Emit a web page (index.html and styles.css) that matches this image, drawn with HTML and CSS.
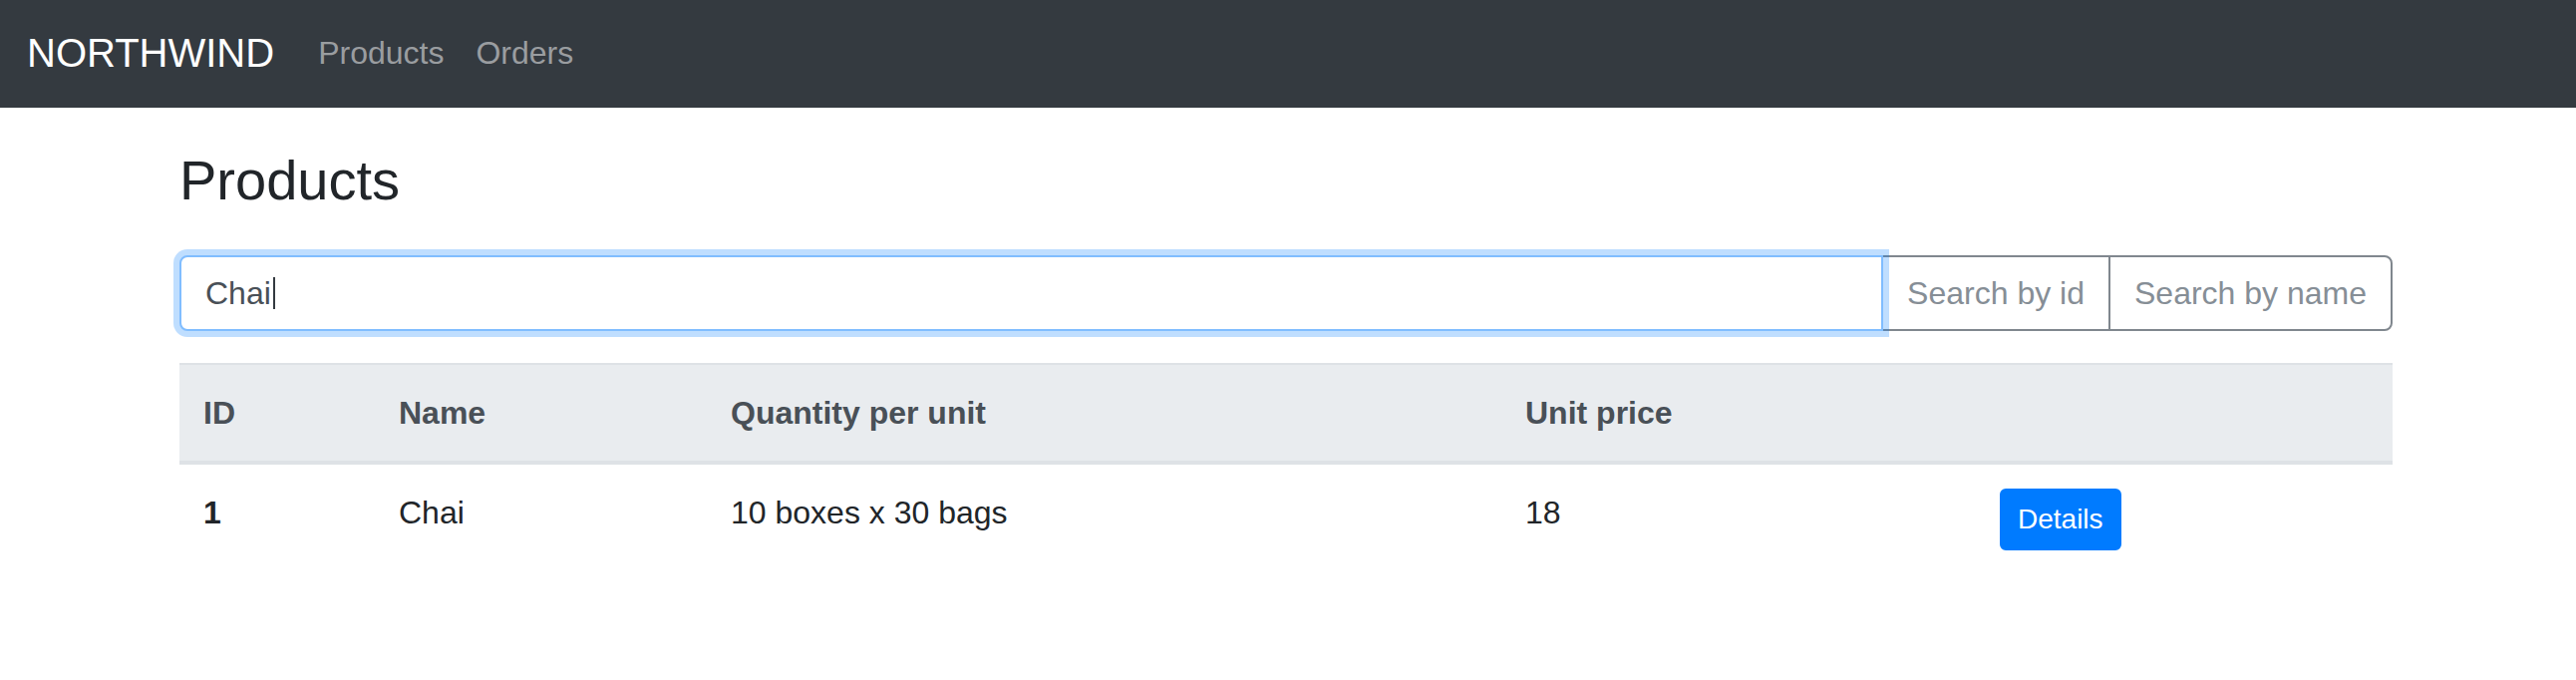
FILE: index.html
```html
<!DOCTYPE html>
<html lang="en">
<head>
<meta charset="utf-8">
<title>Northwind - Products</title>
<link rel="stylesheet" href="styles.css">
</head>
<body>
<nav class="navbar">
  <a class="brand" href="#">NORTHWIND</a>
  <div class="nav-links">
    <a class="nav-link" href="#">Products</a>
    <a class="nav-link" href="#">Orders</a>
  </div>
</nav>
<main class="container">
  <h3 class="page-title">Products</h3>
  <div class="input-group">
    <div class="search-main"><span class="search-value">Chai</span><span class="caret"></span></div>
    <div class="addon">Search by id</div>
    <div class="addon addon-last">Search by name</div>
  </div>
  <table class="table">
    <colgroup>
      <col class="w-id">
      <col class="w-name">
      <col class="w-qty">
      <col class="w-price">
      <col class="w-act">
    </colgroup>
    <thead>
      <tr>
        <th>ID</th>
        <th>Name</th>
        <th>Quantity per unit</th>
        <th>Unit price</th>
        <th></th>
      </tr>
    </thead>
    <tbody>
      <tr>
        <th class="row-id">1</th>
        <td>Chai</td>
        <td>10 boxes x 30 bags</td>
        <td>18</td>
        <td><button class="btn-details" type="button">Details</button></td>
      </tr>
    </tbody>
  </table>
</main>
</body>
</html>
```
FILE: styles.css
```css
html, body {
  margin: 0;
  padding: 0;
  background: #ffffff;
}

body {
  font-family: "Liberation Sans", Arial, sans-serif;
  color: #212529;
  font-size: 32px;
  line-height: 48px;
}

.navbar {
  display: flex;
  align-items: center;
  height: 108px;
  box-sizing: border-box;
  padding: 0 0 3px 27px;
  background: #343a40;
}

.brand {
  font-size: 40px;
  line-height: 60px;
  color: #ffffff;
  text-decoration: none;
  margin-right: 28px;
}

.nav-links {
  display: flex;
}

.nav-link {
  font-size: 32px;
  line-height: 48px;
  padding: 0 16px;
  color: #9a9da0;
  text-decoration: none;
}

.container {
  width: 2220px;
  margin-left: 180px;
}

.page-title {
  font-size: 56px;
  line-height: 67px;
  font-weight: 500;
  margin: 39px 0 42px;
  color: #212529;
}

.input-group {
  display: flex;
  height: 76px;
  margin-bottom: 32px;
}

.search-main {
  flex: 1;
  display: flex;
  align-items: center;
  box-sizing: border-box;
  padding: 0 24px;
  border: 2px solid #80bdff;
  border-radius: 8px 0 0 8px;
  box-shadow: 0 0 0 6px rgba(0, 123, 255, 0.25);
  color: #495057;
  background: #ffffff;
  position: relative;
  z-index: 2;
}

.caret {
  display: inline-block;
  width: 2px;
  height: 32px;
  margin-left: 2px;
  background: #343a40;
}

.addon {
  display: flex;
  align-items: center;
  box-sizing: border-box;
  padding: 0 24px;
  margin-left: -2px;
  border: 2px solid #80878e;
  color: #868e96;
  white-space: nowrap;
  background: #ffffff;
}

.addon-last {
  border-radius: 0 8px 8px 0;
}

.table {
  width: 2220px;
  table-layout: fixed;
  border-collapse: separate;
  border-spacing: 0;
}

.w-id { width: 196px; }
.w-name { width: 333px; }
.w-qty { width: 797px; }
.w-price { width: 476px; }
.w-act { width: 418px; }

.table th,
.table td {
  padding: 24px;
  text-align: left;
  vertical-align: top;
  font-size: 32px;
  line-height: 48px;
}

.table thead th {
  background: #e9ecef;
  color: #495057;
  font-weight: bold;
  border-top: 2px solid #dee2e6;
  border-bottom: 4px solid #dee2e6;
}

.table tbody td {
  color: #212529;
}

.row-id {
  font-weight: bold;
  color: #212529;
}

.btn-details {
  display: inline-block;
  vertical-align: top;
  font-family: "Liberation Sans", Arial, sans-serif;
  font-size: 28px;
  line-height: 42px;
  padding: 8px 16px;
  margin: 0;
  color: #ffffff;
  background: #007bff;
  border: 2px solid #007bff;
  border-radius: 6px;
}
```
